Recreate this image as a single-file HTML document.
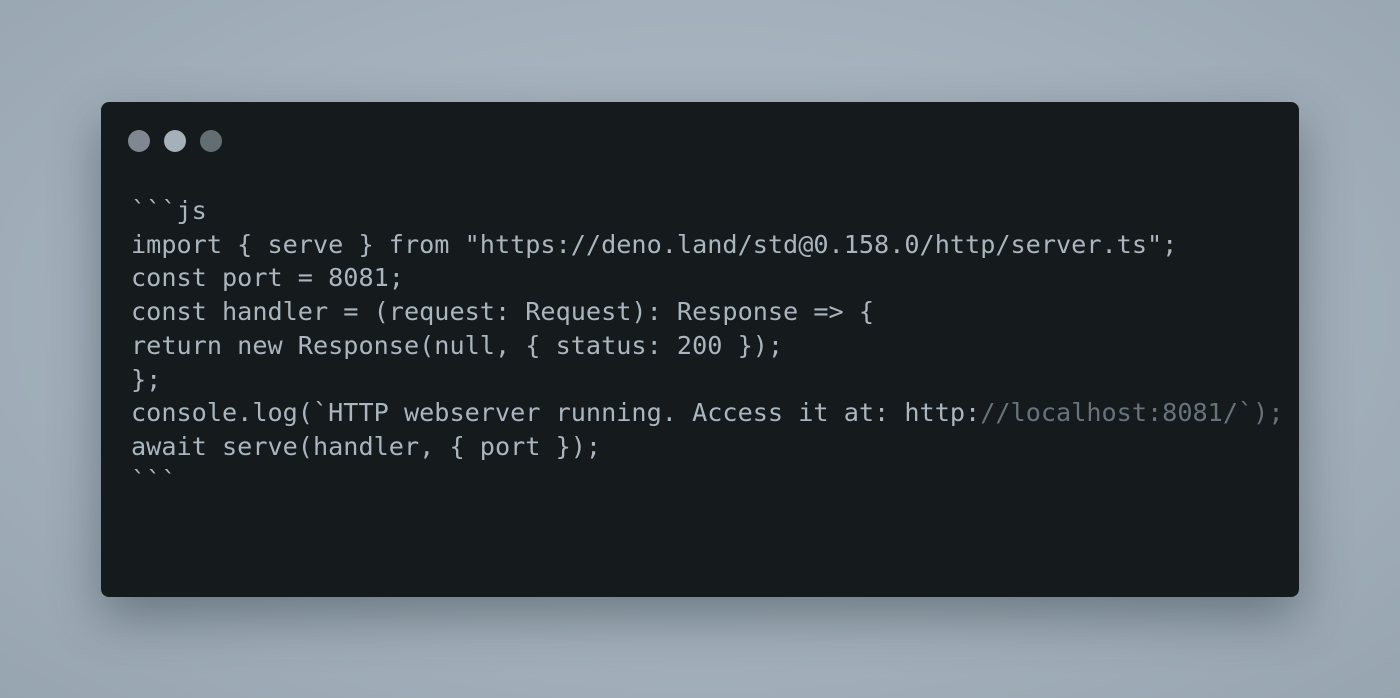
<!DOCTYPE html>
<html><head><style>
html,body{margin:0;padding:0}
body{width:1400px;height:698px;background:radial-gradient(ellipse at 50% 45%,#b0bcc6 0%,#a3b0bb 60%,#97a5b0 100%);position:relative;overflow:hidden;font-family:"DejaVu Sans Mono","Liberation Mono",monospace}
.card{position:absolute;left:101px;top:102px;width:1198px;height:495px;background:#151a1c;border-radius:8px;box-shadow:0 20px 50px rgba(40,55,65,.45)}
.dot{position:absolute;top:130px;width:22px;height:22px;border-radius:50%}
.code{position:absolute;left:131px;top:194px;margin:0;font-family:"DejaVu Sans Mono",monospace;font-size:25.2px;line-height:33.7px;color:#a9b6bf;white-space:pre}
.c{color:#67737c}
</style></head><body>
<div class="card"></div>
<div class="dot" style="left:128px;background:#7f8891"></div>
<div class="dot" style="left:164px;background:#a5b0ba"></div>
<div class="dot" style="left:200px;background:#636e73"></div>
<div class="code"><div>&#96;&#96;&#96;js</div><div>import { serve } from "https://deno.land/std@0.158.0/http/server.ts";</div><div>const port = 8081;</div><div>const handler = (request: Request): Response =&gt; {</div><div>return new Response(null, { status: 200 });</div><div>};</div><div>console.log(&#96;HTTP webserver running. Access it at: http:<span class="c">//localhost:8081/&#96;);</span></div><div>await serve(handler, { port });</div><div>&#96;&#96;&#96;</div></div>
</body></html>
